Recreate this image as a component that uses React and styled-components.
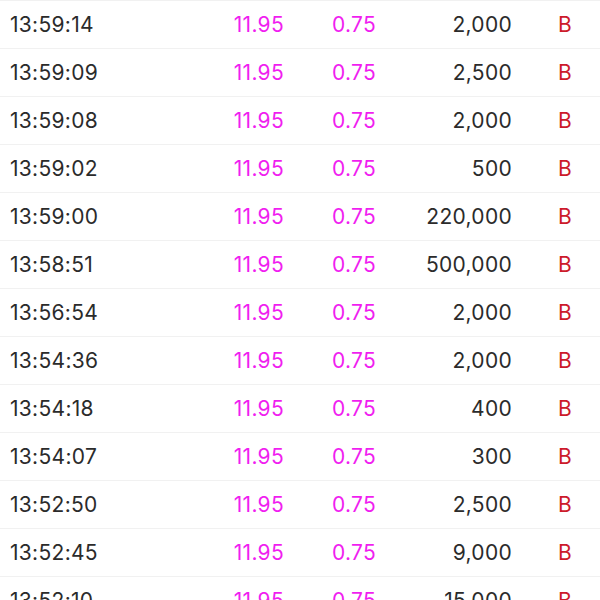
import React from "react";
import styled, { createGlobalStyle } from "styled-components";

const GlobalStyle = createGlobalStyle`
  html, body {
    margin: 0;
    padding: 0;
    background: #ffffff;
  }
  body {
    font-family: Inter, "Liberation Sans", sans-serif;
  }
`;

const trades = [
  ["13:59:14", "11.95", "0.75", "2,000", "B"],
  ["13:59:09", "11.95", "0.75", "2,500", "B"],
  ["13:59:08", "11.95", "0.75", "2,000", "B"],
  ["13:59:02", "11.95", "0.75", "500", "B"],
  ["13:59:00", "11.95", "0.75", "220,000", "B"],
  ["13:58:51", "11.95", "0.75", "500,000", "B"],
  ["13:56:54", "11.95", "0.75", "2,000", "B"],
  ["13:54:36", "11.95", "0.75", "2,000", "B"],
  ["13:54:18", "11.95", "0.75", "400", "B"],
  ["13:54:07", "11.95", "0.75", "300", "B"],
  ["13:52:50", "11.95", "0.75", "2,500", "B"],
  ["13:52:45", "11.95", "0.75", "9,000", "B"],
  ["13:52:10", "11.95", "0.75", "15,000", "B"],
];

const List = styled.div`
  width: 600px;
  height: 600px;
  overflow: hidden;
  background: #fff;
`;

const Row = styled.div`
  display: grid;
  grid-template-columns: 200px 84px 136px 92px 1fr;
  align-items: center;
  height: 48px;
  box-sizing: border-box;
  border-top: 1px solid #f1f1f1;
  font-size: 21px;
  letter-spacing: 0.3px;
`;

const Time = styled.span`
  padding-left: 10px;
  color: #2b2b2b;
`;

const Price = styled.span`
  text-align: right;
  color: #f01ef0;
`;

const Change = styled.span`
  padding-left: 48px;
  color: #f01ef0;
`;

const Volume = styled.span`
  text-align: right;
  color: #2b2b2b;
`;

const Side = styled.span`
  padding-left: 46px;
  color: ${(p) => (p.$buy ? "#cc1b2b" : "#1a9a3a")};
`;

export default function App() {
  return (
    <>
      <GlobalStyle />
      <List>
        {trades.map(([t, price, chg, vol, side], i) => (
          <Row key={i}>
            <Time>{t}</Time>
            <Price>{price}</Price>
            <Change>{chg}</Change>
            <Volume>{vol}</Volume>
            <Side $buy={side === "B"}>{side}</Side>
          </Row>
        ))}
      </List>
    </>
  );
}
